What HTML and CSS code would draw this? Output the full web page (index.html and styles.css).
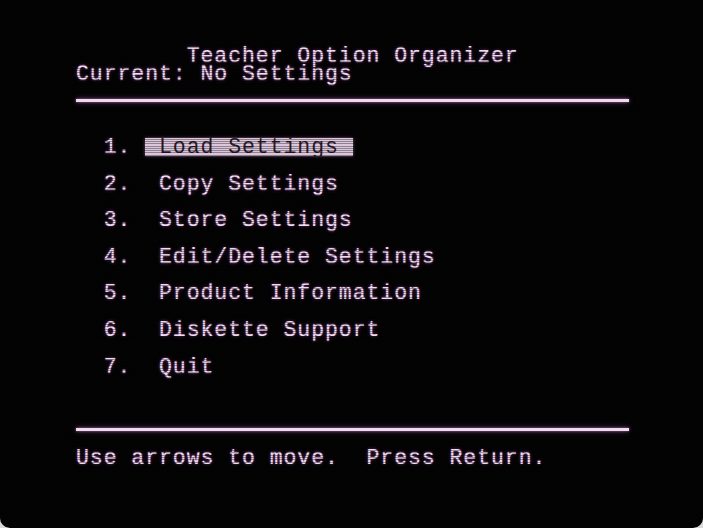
FILE: index.html
```html
<!DOCTYPE html>
<html>
<head>
<meta charset="utf-8">
<link rel="stylesheet" href="styles.css">
</head>
<body>
<div class="screen">
  <div class="text">
    <div class="row">        Teacher Option Organizer</div>
    <div class="row">Current: No Settings</div>
    <div class="row rule"></div>
    <div class="row"></div>
    <div class="row"></div>
    <div class="row">  1. <span class="inv"> Load Settings </span></div>
    <div class="row"></div>
    <div class="row">  2.  Copy Settings</div>
    <div class="row"></div>
    <div class="row">  3.  Store Settings</div>
    <div class="row"></div>
    <div class="row">  4.  Edit/Delete Settings</div>
    <div class="row"></div>
    <div class="row">  5.  Product Information</div>
    <div class="row"></div>
    <div class="row">  6.  Diskette Support</div>
    <div class="row"></div>
    <div class="row">  7.  Quit</div>
    <div class="row"></div>
    <div class="row"></div>
    <div class="row rule"></div>
    <div class="row"></div>
    <div class="row">Use arrows to move.  Press Return.</div>
    <div class="row"></div>
  </div>
  <div class="scan"></div>
</div>
</body>
</html>
```

FILE: styles.css
```css
html, body {
  margin: 0;
  padding: 0;
  background: #d9d9d9;
}
.screen {
  position: relative;
  width: 703px;
  height: 528px;
  background: #030303;
  border-radius: 0 0 10px 10px;
  overflow: hidden;
  box-sizing: border-box;
  padding: 46.5px 0 0 76px;
}
.text {
  display: flex;
  flex-direction: column;
  width: 553px;
  font-family: "Liberation Mono", "DejaVu Sans Mono", monospace;
  font-size: 21.5px;
  letter-spacing: 0.93px;
  color: #f0dcf0;
  text-shadow: 0 0 1.5px rgba(220, 140, 225, 0.7), 0 0 4px rgba(160, 80, 175, 0.45);
}
.row {
  height: 18.3px;
  line-height: 18.3px;
  white-space: pre;
}
.rule {
  display: flex;
  align-items: flex-end;
}
.rule::after {
  content: "";
  display: block;
  position: relative;
  z-index: 2;
  width: 100%;
  height: 3px;
  margin-bottom: -0.5px;
  background: #eedcee;
  box-shadow: 0 0 3px rgba(230, 140, 230, 0.7), 0 0 6px rgba(170, 90, 180, 0.45);
}
.inv {
  display: inline-block;
  height: 18.3px;
  vertical-align: top;
  background: #dcc6dc;
  color: #2a1c2a;
  text-shadow: none;
  box-shadow: 0 0 3px rgba(220, 150, 220, 0.6);
}
.scan {
  position: absolute;
  z-index: 1;
  inset: 0;
  pointer-events: none;
  background: repeating-linear-gradient(to bottom, rgba(0,0,0,0) 0px, rgba(0,0,0,0) 1.3px, rgba(0,0,0,0.35) 1.3px, rgba(0,0,0,0.35) 2.29px);
}
```
